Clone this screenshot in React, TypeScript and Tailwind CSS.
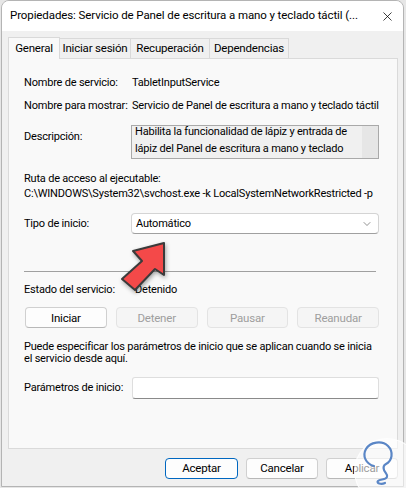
import { X, ChevronDown } from "lucide-react";

const font = "font-['Roboto',sans-serif]";

function Btn({ label, disabled, primary, w }: { label: string; disabled?: boolean; primary?: boolean; w: string }) {
    return (
        <div
            className={`${w} h-[21px] rounded-[4px] flex items-center justify-center text-[11.5px] border ${
                disabled
                    ? "bg-[#f5f5f5] border-[#e3e3e3] text-[#9e9e9e]"
                    : primary
                    ? "bg-[#fdfdfd] border-[#0067c0] border-[1.5px] text-black"
                    : "bg-[#fdfdfd] border-[#d0d0d0] border-b-[#b8b8b8] text-black"
            }`}
        >
            {label}
        </div>
    );
}

function Tab({ label, active, w }: { label: string; active?: boolean; w: string }) {
    return (
        <div
            className={`${w} flex items-center justify-center border border-[#d9d9d9] whitespace-nowrap ${
                active ? "h-[22px] bg-[#f9f9f9] border-b-0 z-10 -mb-[1px]" : "h-[20px] bg-[#f0f0f0] border-l-0 border-b-0"
            }`}
        >
            {label}
        </div>
    );
}

export default function App() {
    return (
        <div className={`w-[406px] h-[488px] bg-[#e6e6e6] relative overflow-hidden text-black text-[11px] tracking-[-0.2px] ${font}`}>
            <div className="ml-[1px] w-[403px] h-[487px] rounded-t-[8px] border border-[#b4b4b4] bg-[#f0f0f0] flex flex-col overflow-hidden">
                <div className="h-[30px] bg-white flex items-center justify-between pl-[8px] pr-[8px] shrink-0">
                    <span className="whitespace-nowrap text-[11.5px] tracking-[-0.1px]">
                        Propiedades: Servicio de Panel de escritura a mano y teclado táctil (...
                    </span>
                    <X className="w-[15px] h-[15px]" strokeWidth={1.2} />
                </div>

                <div className="flex items-end pl-[6px] pt-[6px] shrink-0 text-[11.5px]">
                    <Tab label="General" active w="w-[52px]" />
                    <Tab label="Iniciar sesión" w="w-[71px]" />
                    <Tab label="Recuperación" w="w-[79px]" />
                    <Tab label="Dependencias" w="w-[79px]" />
                </div>

                <div className="ml-[6px] mr-[5px] h-[391px] bg-[#f9f9f9] border border-[#dadada] pl-[15px] pr-[18px] pt-[16px] flex flex-col leading-[16px] shrink-0 whitespace-nowrap">
                    <div className="flex">
                        <span className="w-[108px] shrink-0">Nombre de servicio:</span>
                        <span>TabletInputService</span>
                    </div>
                    <div className="flex mt-[7px]">
                        <span className="w-[108px] shrink-0">Nombre para mostrar:</span>
                        <span>Servicio de Panel de escritura a mano y teclado táctil</span>
                    </div>
                    <div className="flex mt-[11px]">
                        <span className="w-[107px] shrink-0 mt-[4px]">Descripción:</span>
                        <div className="w-[250px] h-[34px] border border-[#a9a9a9] bg-[#f0f0f0] flex overflow-hidden">
                            <div className="flex-1 pl-[3px] -mt-[2px] leading-[16.5px] overflow-hidden">
                                Habilita la funcionalidad de lápiz y entrada de
                                <br />
                                lápiz del Panel de escritura a mano y teclado
                                <br />
                                táctil
                            </div>
                            <div className="w-[16px] bg-[#e6e6e6]" />
                        </div>
                    </div>
                    <div className="mt-[12px] leading-[15px]">Ruta de acceso al ejecutable:</div>
                    <div className="leading-[15px] overflow-hidden">
                        C:\WINDOWS\System32\svchost.exe -k LocalSystemNetworkRestricted -p
                    </div>
                    <div className="flex items-center mt-[12px]">
                        <span className="w-[107px] shrink-0">Tipo de inicio:</span>
                        <div className="w-[250px] h-[21px] bg-white border border-[#d4d4d4] border-b-[#a0a0a0] rounded-[4px] flex items-center justify-between pl-[4px] pr-[5px]">
                            <span>Automático</span>
                            <ChevronDown className="w-[12px] h-[12px] text-[#555]" strokeWidth={1.3} />
                        </div>
                    </div>
                    <div className="mt-[37px] h-[1px] bg-[#a0a0a0] mr-[3px]" />
                    <div className="flex mt-[10px]">
                        <span className="w-[111px] shrink-0">Estado del servicio:</span>
                        <span>Detenido</span>
                    </div>
                    <div className="flex gap-[9px] mt-[9px] ml-[1px]">
                        <Btn label="Iniciar" w="w-[82px]" />
                        <Btn label="Detener" disabled w="w-[82px]" />
                        <Btn label="Pausar" disabled w="w-[82px]" />
                        <Btn label="Reanudar" disabled w="w-[82px]" />
                    </div>
                    <div className="mt-[13px] leading-[12px]">
                        Puede especificar los parámetros de inicio que se aplican cuando se inicia
                        <br />
                        el servicio desde aquí.
                    </div>
                    <div className="flex items-center mt-[12px]">
                        <span className="w-[108px] shrink-0">Parámetros de inicio:</span>
                        <div className="w-[248px] h-[22px] bg-white border border-[#dedede] border-b-[#8a8a8a] rounded-[3px]" />
                    </div>
                </div>

                <div className="flex justify-end gap-[8px] pr-[5px] mt-[9px]">
                    <Btn label="Aceptar" primary w="w-[73px]" />
                    <Btn label="Cancelar" w="w-[72px]" />
                    <Btn label="Aplicar" w="w-[72px]" />
                </div>
            </div>

            {/* red arrow pointing at the startup type */}
            <svg className="absolute left-0 top-0 pointer-events-none" width="406" height="488">
                <defs>
                    <filter id="sh" x="-20%" y="-20%" width="140%" height="140%">
                        <feDropShadow dx="1" dy="2" stdDeviation="2" floodColor="#000" floodOpacity="0.35" />
                    </filter>
                </defs>
                <polygon
                    points="164,243 133,251 142,261 122,279 135,290 155,269 164,275"
                    fill="#f44848"
                    stroke="#3a3a3a"
                    strokeWidth="2"
                    strokeLinejoin="round"
                    filter="url(#sh)"
                />
            </svg>

            {/* watermark logo */}
            <div className="absolute left-[354px] top-[438px] w-[66px] h-[66px] rounded-full bg-white/60 border border-white/80" />
            <svg className="absolute left-[354px] top-[436px] pointer-events-none" width="52" height="52" viewBox="0 0 52 52">
                <path
                    d="M20 30 C12 28 8 20 12 13 C16 6 28 4 34 10 C40 16 38 25 32 28 C30 29 29 31 30 34 C31 37 34 38 33 41 C32 44 26 43 24 45 C22 47 27 49 31 47"
                    fill="none"
                    stroke="#5a86c6"
                    strokeWidth="2.2"
                    strokeLinecap="round"
                />
            </svg>
        </div>
    );
}
